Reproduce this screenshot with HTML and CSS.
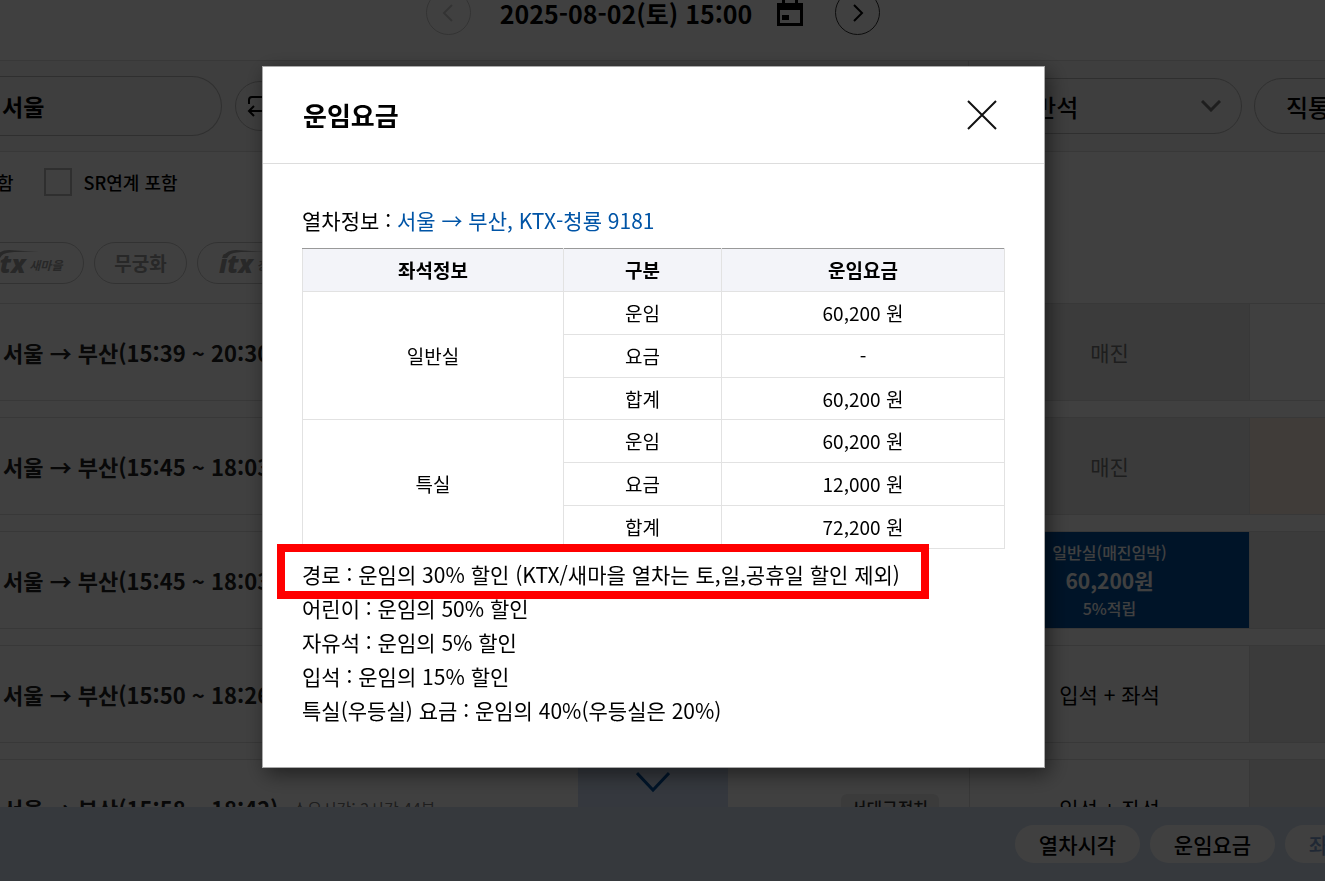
FILE: index.html
```html
<!DOCTYPE html>
<html lang="ko">
<head>
<meta charset="utf-8">
<title>운임요금</title>
<link rel="stylesheet" href="styles.css">
</head>
<body>
<main class="page">
  <div class="datebar">
    <button class="round-btn disabled" aria-label="이전"><svg width="12" height="20" viewBox="0 0 12 20"><path d="M10 2L2 10l8 8"/></svg></button>
    <button class="date">2025-08-02(토) 15:00
      <svg class="calendar" width="26" height="26" viewBox="0 0 26 26"><path fill-rule="evenodd" d="M0 3h5V0h3v3h10V0h3v3h5v23H0zM3 10v13h20V10zM5 15h7v5H5z"/></svg>
    </button>
    <button class="round-btn" aria-label="다음"><svg width="12" height="20" viewBox="0 0 12 20"><path d="M2 2l8 8-8 8"/></svg></button>
  </div>

  <div class="search">
    <button class="station">서울</button>
    <button class="swap" aria-label="출발 도착 교체"><svg width="24" height="22" viewBox="0 0 24 22"><path d="M1 9V5q0-3 3-3h17m-4-4l5 4-5 5M23 10v3q0 3-3 3H1m5-5l-5 5 5 5"/></svg></button>
    <div class="selects">
      <label class="select-wrap"><select class="select" aria-label="좌석 종류"><option>일반석</option></select><svg class="chevron" width="20" height="12" viewBox="0 0 20 12"><path d="M1 1l9 9 9-9"/></svg></label>
      <label class="select-wrap"><select class="select" aria-label="여정"><option>직통</option></select></label>
    </div>
  </div>

  <div class="filters">
    <div class="checks">
      <span>함</span>
      <label class="check"><input type="checkbox" class="box">SR연계 포함</label>
    </div>
    <div class="trains">
      <button class="train train-first"><span class="itx">itx<svg class="swoosh" width="44" height="8" viewBox="0 0 44 8"><path d="M0 8Q4 0 14 0L44 2Q20 1 12 3 7 4 5 8z"/></svg></span><span class="brand">새마을</span></button>
      <button class="train train-mid">무궁화</button>
      <button class="train train-last"><span class="itx">itx<svg class="swoosh" width="44" height="8" viewBox="0 0 44 8"><path d="M0 8Q4 0 14 0L44 2Q20 1 12 3 7 4 5 8z"/></svg></span><span class="brand">청춘</span></button>
    </div>
  </div>

  <div class="list">
    <div class="row"><div class="trip">서울 → 부산(15:39 ~ 20:30)</div><div class="seat soldout">매진</div><div class="seat"></div></div>
    <div class="row"><div class="trip">서울 → 부산(15:45 ~ 18:03)</div><div class="seat soldout">매진</div><div class="seat waiting"></div></div>
    <div class="row"><div class="trip">서울 → 부산(15:45 ~ 18:03)</div><div class="seat selected"><span>일반실(매진임박)</span><strong>60,200원</strong><span>5%적립</span></div><div class="seat soldout"></div></div>
    <div class="row"><div class="trip">서울 → 부산(15:50 ~ 18:26)</div><div class="seat">입석 + 좌석</div><div class="seat soldout"></div></div>
    <div class="row"><div class="trip">서울 → 부산(15:58 ~ 18:42)<span class="duration">소요시간: 2시간 44분</span><span class="tag">서대구정차</span></div><div class="seat">입석 + 좌석</div><div class="seat soldout"></div></div>
  </div>
</main>

<div class="dock">
  <button class="fold" aria-label="접기"><svg width="34" height="22" viewBox="0 0 34 22"><path d="M1 2l16 17L33 2"/></svg></button>
  <div class="actions">
    <button class="action">열차시각</button>
    <button class="action">운임요금</button>
    <button class="action muted">좌석선택</button>
  </div>
</div>

<div class="overlay">
  <section class="modal" role="dialog" aria-labelledby="modal-title">
    <header class="modal-head">
      <h1 class="modal-title" id="modal-title">운임요금</h1>
      <button class="close" aria-label="닫기"><svg width="32" height="32" viewBox="0 0 32 32"><path d="M2 2l28 28M30 2L2 30"/></svg></button>
    </header>
    <div class="modal-body">
      <p class="info">열차정보 : <span class="info-train">서울 → 부산, KTX-청룡 9181</span></p>
      <table class="fares">
        <colgroup><col class="col-seat"><col class="col-kind"><col></colgroup>
        <thead><tr><th>좌석정보</th><th>구분</th><th>운임요금</th></tr></thead>
        <tbody>
          <tr><td rowspan="3">일반실</td><td>운임</td><td>60,200 원</td></tr>
          <tr><td>요금</td><td>-</td></tr>
          <tr><td>합계</td><td>60,200 원</td></tr>
          <tr><td rowspan="3">특실</td><td>운임</td><td>60,200 원</td></tr>
          <tr><td>요금</td><td>12,000 원</td></tr>
          <tr><td>합계</td><td>72,200 원</td></tr>
        </tbody>
      </table>
      <ul class="notes">
        <li class="marked">경로 : 운임의 30% 할인 (KTX/새마을 열차는 토,일,공휴일 할인 제외)</li>
        <li>어린이 : 운임의 50% 할인</li>
        <li>자유석 : 운임의 5% 할인</li>
        <li>입석 : 운임의 15% 할인</li>
        <li>특실(우등실) 요금 : 운임의 40%(우등실은 20%)</li>
      </ul>
    </div>
  </section>
</div>
</body>
</html>
```
FILE: styles.css
```css
*, *::after { box-sizing: border-box; }
html, body { height: 100%; }
body {
  margin: 0;
  overflow: hidden;
  background: #fff;
  color: #000;
  font-family: "Noto Sans CJK KR", sans-serif;
  font-size: 19px;
}
button, select { font: inherit; color: inherit; background: none; border: 0; padding: 0; margin: 0; }
svg { fill: none; stroke: currentColor; stroke-width: 2; flex: none; }
.page { height: 100vh; overflow: hidden; }

.datebar {
  display: flex;
  justify-content: center;
  align-items: center;
  height: 71px;
  margin-top: -10px;
  padding: 0 19px 25px 0;
  border-bottom: 1px solid #ddd;
}
.round-btn {
  display: flex;
  align-items: center;
  justify-content: center;
  width: 45px;
  height: 45px;
  border: 1px solid #333;
  border-radius: 50%;
}
.round-btn.disabled { border-color: #ccc; color: #ccc; }
.date { display: flex; align-items: center; gap: 25px; margin: 0 32px 0 29px; font-size: 25px; font-weight: 700; line-height: 32px; }
.calendar { fill: #000; stroke: none; }

.search {
  display: flex;
  align-items: center;
  height: 91px;
  background: #f5f5f5;
  border-bottom: 1px solid #ddd;
}
.station {
  width: 223px;
  height: 60px;
  margin-left: -1px;
  padding-left: 3px;
  border: 1px solid #bbb;
  border-left: 0;
  border-radius: 0 30px 30px 0;
  text-align: left;
  font-size: 23px;
  font-weight: 700;
}
.swap { display: flex; align-items: center; justify-content: center; width: 50px; height: 50px; margin-left: 13px; border: 1px solid #bbb; border-radius: 50%; }
.swap svg { overflow: visible; }
.selects { display: flex; align-items: center; gap: 12px; height: 100%; margin: 0 -191px 0 auto; padding-left: 11px; border-left: 1px solid #ddd; }
.select-wrap { position: relative; width: 262px; }
.select { appearance: none; width: 100%; height: 56px; padding-left: 31px; border: 1px solid #bbb; border-radius: 28px; font-size: 24px; font-weight: 500; }
.chevron { position: absolute; right: 21px; top: 22px; color: #777; stroke-width: 3; }

.filters { display: flex; flex-direction: column; gap: 46px; height: 151px; padding-top: 16px; }
.checks { display: flex; align-items: center; gap: 30px; height: 28px; margin-left: -3px; font-size: 18px; font-weight: 500; }
.check { display: flex; align-items: center; gap: 12px; }
.box { appearance: none; width: 28px; height: 28px; margin: 0; border: 2px solid #bbb; }
.trains { display: flex; gap: 10px; color: #a0a0a0; }
.train { display: flex; align-items: center; justify-content: center; gap: 4px; height: 42px; border: 1px solid #c8c8c8; border-radius: 21px; font-size: 19px; font-weight: 700; line-height: 36px; }
.train-first { width: 128px; margin-left: -44px; padding-left: 14px; }
.train-mid { width: 93px; }
.train-last { width: 128px; justify-content: flex-start; padding-left: 21px; }
.itx { position: relative; font: italic 900 25px/26px "Open Sans", sans-serif; }
.swoosh { position: absolute; left: 3px; top: 0; fill: currentColor; stroke: none; }
.brand { padding-top: 4px; font-size: 12px; font-style: italic; }

.list { display: flex; flex-direction: column; gap: 16px; }
.row { display: grid; grid-template-columns: 1fr 280px 76px; height: 98px; border: solid #ddd; border-width: 1px 0; }
.trip { display: flex; align-items: center; padding-left: 3px; color: #222; font-size: 22px; font-weight: 700; white-space: nowrap; }
.duration { margin-left: 14px; color: #777; font-size: 16px; font-weight: 400; }
.tag { margin: 0 30px 0 auto; padding: 0 10px; border-radius: 6px; background: #eaeaea; color: #333; font-size: 17px; font-weight: 500; line-height: 28px; }
.seat { display: flex; flex-direction: column; align-items: center; justify-content: center; border-left: 1px solid #ddd; font-size: 21px; line-height: 28px; }
.soldout { background: #ececec; color: #777; }
.waiting { background: #ffeee2; }
.selected { background: #0050a0; color: #fff; font-size: 16px; font-weight: 500; }
.selected strong { font-size: 21px; }

.dock { position: fixed; left: 0; right: 0; bottom: 0; display: flex; flex-direction: column; align-items: center; overflow: hidden; }
.fold { display: flex; align-items: center; justify-content: center; width: 150px; height: 50px; margin-right: 19px; background: #d2dff5; color: #0050a0; }
.fold svg { stroke-width: 3; }
.actions { display: flex; align-items: center; align-self: stretch; justify-content: flex-end; gap: 10px; height: 74px; margin-right: -85px; background: #d8e4f4; }
.action { width: 125px; height: 38px; border-radius: 19px; background: #fff; font-size: 21px; font-weight: 500; line-height: 36px; }
.muted { color: #80a0d0; }

.overlay { position: fixed; inset: 0; display: flex; justify-content: center; align-items: flex-start; padding: 66px 18px 0 0; background: rgba(0, 0, 0, .75); }
.modal { width: 100%; max-width: 783px; border: 1px solid #aaa; background: #fff; box-shadow: 4px 6px 20px rgba(0, 0, 0, .5); }
.modal-head { display: flex; align-items: center; justify-content: space-between; height: 97px; padding: 0 46px 0 40px; border-bottom: 1px solid #ddd; }
.modal-title { margin: 0; font-size: 26px; font-weight: 700; line-height: 38px; }
.close { display: flex; color: #111; }
.modal-body { padding: 40px 39px; }
.info { margin: 0; font-size: 21px; line-height: 32px; }
.info-train { color: #0054a6; }
.fares { width: 100%; height: 301px; margin-top: 12px; border-collapse: collapse; table-layout: fixed; text-align: center; line-height: 28px; }
.col-seat { width: 261px; }
.col-kind { width: 158px; }
.fares th, .fares td { padding: 0; border: 1px solid #e2e2e2; }
.fares th { height: 43px; background: #f3f4f9; font-weight: 700; border-top-color: #999; }
.notes { margin: 8px 0 0; padding: 0; list-style: none; font-size: 21px; line-height: 34px; }
.marked { position: relative; }
.marked::after { content: ""; position: absolute; left: -25px; top: -13px; width: 652px; height: 55px; border: 8px solid #f00; }
```
